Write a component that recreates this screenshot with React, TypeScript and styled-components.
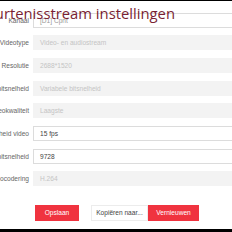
import { Fragment } from "react";
import styled, { createGlobalStyle } from "styled-components";

const GlobalStyle = createGlobalStyle`
  html, body {
    margin: 0;
    padding: 0;
    background: #000;
  }
  body {
    width: 232px;
    height: 232px;
    overflow: hidden;
    font-family: "Liberation Sans", Arial, sans-serif;
  }
`;

const Page = styled.div`
  position: relative;
  margin-top: 1px;
  width: 232px;
  height: 228px;
  background: #fff;
  overflow: hidden;
`;

const Title = styled.div`
  position: absolute;
  top: 1.5px;
  left: 0;
  width: 175px;
  display: flex;
  justify-content: flex-end;
  white-space: nowrap;
  font-family: "Open Sans", sans-serif;
  font-size: 14.8px;
  line-height: 20px;
  color: #7a1f33;
`;

const Form = styled.div`
  display: grid;
  grid-template-columns: 29px 220px;
  grid-auto-rows: 15px;
  column-gap: 4px;
  row-gap: 7.7px;
  padding-top: 11.5px;
`;

const Label = styled.div`
  display: flex;
  justify-content: flex-end;
  align-items: center;
  white-space: nowrap;
  font-size: 6.6px;
  color: #666;
`;

const Field = styled.div<{ $disabled?: boolean; $muted?: boolean }>`
  display: flex;
  align-items: center;
  box-sizing: border-box;
  padding-left: 6px;
  font-size: 6.6px;
  background: ${({ $disabled }) => ($disabled ? "#f3f3f3" : "#fff")};
  border: 1px solid ${({ $disabled }) => ($disabled ? "#f3f3f3" : "#dcdcdc")};
  color: ${({ $disabled, $muted }) =>
    $disabled ? "#c4c4c4" : $muted ? "#999" : "#444"};
`;

const Buttons = styled.div`
  display: flex;
  align-items: center;
  margin-top: 18.5px;
  padding-left: 35px;
`;

const Button = styled.button<{ $primary?: boolean; $width: number }>`
  box-sizing: border-box;
  width: ${({ $width }) => $width}px;
  height: 16px;
  padding: 0;
  font-family: "Liberation Sans", Arial, sans-serif;
  font-size: 6.6px;
  border: 1px solid ${({ $primary }) => ($primary ? "#f0333f" : "#ececec")};
  background: ${({ $primary }) => ($primary ? "#f0333f" : "#fff")};
  color: ${({ $primary }) => ($primary ? "#fff" : "#444")};
`;

const Spacer = styled.div`
  width: 12px;
`;

const rows = [
  { label: "Kanaal", value: "[D1] Cpnt", disabled: false, muted: true },
  { label: "Videotype", value: "Video- en audiostream", disabled: true },
  { label: "Resolutie", value: "2688*1520", disabled: true },
  { label: "Type bitsnelheid", value: "Variabele bitsnelheid", disabled: true },
  { label: "Videokwaliteit", value: "Laagste", disabled: true },
  { label: "Framesnelheid video", value: "15 fps", disabled: false },
  { label: "Max. bitsnelheid", value: "9728", disabled: false },
  { label: "Videocodering", value: "H.264", disabled: true },
];

const App = () => {
  return (
    <>
      <GlobalStyle />
      <Page>
        <Form>
          {rows.map((row) => (
            <Fragment key={row.label}>
              <Label>{row.label}</Label>
              <Field $disabled={row.disabled} $muted={row.muted}>
                {row.value}
              </Field>
            </Fragment>
          ))}
        </Form>
        <Buttons>
          <Button $primary $width={44}>
            Opslaan
          </Button>
          <Spacer />
          <Button $width={57}>Kopiëren naar...</Button>
          <Button $primary $width={51}>
            Vernieuwen
          </Button>
        </Buttons>
        <Title>Gebeurtenisstream instellingen</Title>
      </Page>
    </>
  );
};

export default App;
